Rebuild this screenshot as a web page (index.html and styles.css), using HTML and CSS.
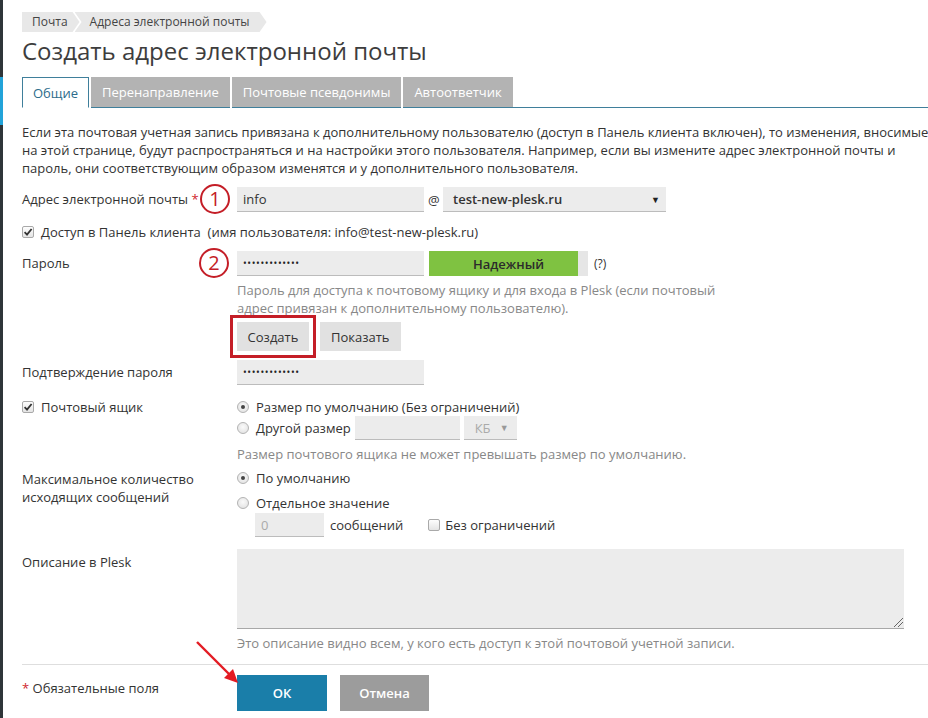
FILE: index.html
```html
<!DOCTYPE html>
<html lang="ru">
<head>
<meta charset="utf-8">
<title>Создать адрес электронной почты</title>
<link rel="stylesheet" href="styles.css">
</head>
<body>
<div class="layout">
  <div class="strip"><div class="strip-active"></div></div>
  <main class="main">
    <nav class="crumbs">
      <span class="crumb crumb-first">Почта</span>
      <span class="crumb crumb-next">Адреса электронной почты</span>
    </nav>
    <h1 class="title">Создать адрес электронной почты</h1>
    <div class="tabs">
      <span class="tab tab-active">Общие</span>
      <span class="tab">Перенаправление</span>
      <span class="tab">Почтовые псевдонимы</span>
      <span class="tab">Автоответчик</span>
      <span class="tab-rest"></span>
    </div>
    <p class="intro">
      <span class="line">Если эта почтовая учетная запись привязана к дополнительному пользователю (доступ в Панель клиента включен), то изменения, вносимые</span>
      <span class="line">на этой странице, будут распространяться и на настройки этого пользователя. Например, если вы измените адрес электронной почты и</span>
      <span class="line">пароль, они соответствующим образом изменятся и у дополнительного пользователя.</span>
    </p>

    <div class="row row-email">
      <div class="label label-input">Адрес электронной почты <span class="req">*</span></div>
      <div class="field inline">
        <span class="input input-main">info</span>
        <span class="at">@</span>
        <span class="select select-domain">test-new-plesk.ru<span class="caret">▼</span></span>
      </div>
      <span class="mark mark-1">1</span>
    </div>

    <div class="row-check">
      <span class="checkbox checked"><svg viewBox="0 0 12 12" width="12" height="12"><path d="M2.6 6.2 L5 8.6 L9.6 3" fill="none" stroke="#333" stroke-width="1.8"/></svg></span>
      <span>Доступ в Панель клиента &nbsp;(имя пользователя: info@test-new-plesk.ru)</span>
    </div>

    <div class="row row-pass">
      <div class="label label-input">Пароль</div>
      <div class="field">
        <div class="inline">
          <span class="input input-main dots">•••••••••••••</span>
          <span class="strength"><span class="strength-fill"></span><span class="strength-text">Надежный</span></span>
          <span class="hint-q">(?)</span>
        </div>
        <p class="help help-pass">Пароль для доступа к почтовому ящику и для входа в Plesk (если почтовый адрес привязан к дополнительному пользователю).</p>
        <div class="btns">
          <span class="btn btn-light btn-marked">Создать</span>
          <span class="btn btn-light">Показать</span>
        </div>
      </div>
      <span class="mark mark-2">2</span>
    </div>

    <div class="row row-confirm">
      <div class="label label-input">Подтверждение пароля</div>
      <div class="field"><span class="input input-main dots">•••••••••••••</span></div>
    </div>

    <div class="row row-mailbox">
      <div class="label label-check">
        <span class="checkbox checked"><svg viewBox="0 0 12 12" width="12" height="12"><path d="M2.6 6.2 L5 8.6 L9.6 3" fill="none" stroke="#333" stroke-width="1.8"/></svg></span>
        <span>Почтовый ящик</span>
      </div>
      <div class="field">
        <div class="radio-line first"><span class="radio on"></span>Размер по умолчанию (Без ограничений)</div>
        <div class="radio-line inline"><span class="radio"></span>Другой размер<span class="input input-size"></span><span class="select select-unit">КБ<span class="caret">▼</span></span></div>
        <p class="help">Размер почтового ящика не может превышать размер по умолчанию.</p>
      </div>
    </div>

    <div class="row row-limit">
      <div class="label label-multi">Максимальное количество<br>исходящих сообщений</div>
      <div class="field">
        <div class="radio-line first"><span class="radio on"></span>По умолчанию</div>
        <div class="radio-line second"><span class="radio"></span>Отдельное значение</div>
        <div class="sub inline">
          <span class="input input-num">0</span>
          <span class="sub-text">сообщений</span>
          <span class="checkbox"></span>
          <span>Без ограничений</span>
        </div>
      </div>
    </div>

    <div class="row row-desc">
      <div class="label label-multi desc-label">Описание в Plesk</div>
      <div class="field">
        <span class="textarea"><span class="grip"></span></span>
        <p class="help">Это описание видно всем, у кого есть доступ к этой почтовой учетной записи.</p>
      </div>
    </div>

    <div class="divider"></div>

    <div class="row row-foot">
      <div class="label label-multi foot-label"><span class="req">*</span> Обязательные поля</div>
      <div class="field btns-foot">
        <span class="btn btn-primary">ОК</span>
        <span class="btn btn-cancel">Отмена</span>
      </div>
      <svg class="arrow" width="50" height="50" viewBox="0 0 50 50">
        <line x1="4" y1="4" x2="38" y2="38" stroke="#e31b23" stroke-width="2.4"/>
        <polygon points="45,45 31,40 40,31" fill="#e31b23"/>
      </svg>
    </div>
  </main>
</div>
</body>
</html>
```
FILE: styles.css
```css
* { box-sizing: border-box; }
body {
  margin: 0;
  font-family: "Open Sans", "Noto Sans", sans-serif;
  font-size: 13px;
  color: #333;
  background: #fff;
}
.layout { display: flex; min-height: 718px; }
.strip { width: 3px; background: #2f3539; display: flex; flex-direction: column; }
.strip-active { margin-top: 77px; height: 48px; background: #22a3d9; }
.main { flex: 1; padding: 12px 0 0 19px; min-width: 0; }

/* breadcrumbs */
.crumbs { display: flex; height: 20px; }
.crumb {
  background: #e8e8e8;
  color: #444;
  font-size: 12px;
  line-height: 20px;
  white-space: nowrap;
}
.crumb-first {
  padding: 0 12px 0 10px;
  clip-path: polygon(0 0, calc(100% - 7px) 0, 100% 50%, calc(100% - 7px) 100%, 0 100%);
}
.crumb-next {
  margin-left: -5px;
  padding: 0 17px 0 15px;
  clip-path: polygon(0 0, calc(100% - 7px) 0, 100% 50%, calc(100% - 7px) 100%, 0 100%, 7px 50%);
}

.title {
  margin: 3px 0 0;
  font-size: 24px;
  line-height: 32px;
  font-weight: 400;
  color: #3d3d3d;
}

/* tabs */
.tabs { display: flex; gap: 2px; margin-top: 10px; height: 31px; }
.tab {
  padding: 0 11px;
  line-height: 30px;
  background: #b3b3b3;
  color: #fff;
  white-space: nowrap;
  border-bottom: 1px solid #3f7f9b;
  height: 31px;
}
.tab-active {
  background: #fff;
  color: #2d6c8c;
  border: 1px solid #3f7f9b;
  border-bottom-color: #fff;
  padding: 0 10px;
}
.tab-rest { flex: 1; border-bottom: 1px solid #3f7f9b; margin-left: -2px; }

.intro { margin: 15px 0 0; line-height: 18px; }
.intro .line { display: block; white-space: nowrap; }

/* rows */
.row { display: grid; grid-template-columns: 215px 1fr; align-items: start; position: relative; }
.label { white-space: nowrap; }
.label-input { line-height: 25px; }
.label-multi { line-height: 18px; }
.req { color: #d0262d; }
.inline { display: flex; align-items: center; }
.field { min-width: 0; }

.input {
  display: inline-block;
  height: 25px;
  line-height: 24px;
  padding: 0 6px;
  background: #ececec;
  border-bottom: 1px solid #bcbcbc;
  color: #333;
}
.input-main { width: 187px; }
.dots { font-size: 10px; letter-spacing: 0.6px; color: #222; }
.at { margin: 0 4px 0 4px; width: 11px; }
.select {
  display: inline-flex;
  align-items: center;
  justify-content: space-between;
  height: 25px;
  background: #ececec;
  border-bottom: 1px solid #bcbcbc;
  padding: 0 6px 0 10px;
}
.select-domain { width: 223px; font-weight: 600; font-size: 13px; }
.caret { font-size: 9px; font-weight: 400; color: #222; }

.row-email { margin-top: 10px; }
.row-check { display: flex; align-items: center; margin-top: 10px; height: 20px; gap: 7px; }
.row-pass { margin-top: 9px; }
.row-confirm { margin-top: 9px; }
.row-mailbox { margin-top: 12px; }
.row-limit { margin-top: 5px; }
.row-desc { margin-top: 12px; }

.checkbox {
  display: inline-block;
  width: 12px;
  height: 12px;
  border: 1px solid #a9a9a9;
  border-radius: 2px;
  background: linear-gradient(#fdfdfd, #e4e4e4);
  flex: none;
  position: relative;
}
.checkbox svg { position: absolute; left: -1px; top: -1px; }

.strength {
  position: relative;
  display: inline-flex;
  align-items: center;
  justify-content: center;
  width: 159px;
  height: 25px;
  margin-left: 5px;
  background: #e6e6e6;
}
.strength-fill { position: absolute; left: 0; top: 0; bottom: 0; width: 149px; background: #7fc241; }
.strength-text { position: relative; font-weight: 600; color: #2b2b2b; }
.hint-q { margin-left: 6px; font-size: 12px; }

.help { margin: 5px 0 0; line-height: 18px; color: #888; font-size: 13px; }
.help-pass { width: 486px; }

.btns { display: flex; gap: 11px; margin-top: 5px; }
.btn {
  display: inline-flex;
  align-items: center;
  justify-content: center;
  white-space: nowrap;
}
.btn-light { height: 29px; padding: 0 11px; background: #e1e1e1; color: #333; }
.btn-marked { outline: 3px solid #c41e27; outline-offset: 4px; width: 72px; }

.label-check { display: flex; align-items: center; gap: 7px; height: 19px; }
.radio-line { display: flex; align-items: center; }
.radio-line.first { height: 19px; }
.radio-line.inline { height: 24px; }
.radio {
  width: 12px;
  height: 12px;
  border-radius: 50%;
  border: 1px solid #b3b3b3;
  background: radial-gradient(circle at 50% 40%, #fafafa, #dedede);
  margin-right: 7px;
  flex: none;
  position: relative;
}
.radio.on::after {
  content: "";
  position: absolute;
  left: 3px; top: 3px;
  width: 4px; height: 4px;
  border-radius: 50%;
  background: #444;
}
.input-size { width: 105px; height: 24px; margin-left: 4px; }
.select-unit { width: 53px; height: 24px; margin-left: 4px; color: #aaa; padding: 0 8px 0 11px; }
.select-unit .caret { color: #999; }

.row-limit .label-multi { padding-top: 2px; }
.radio-line.second { height: 18px; margin-top: 7px; }
.sub { margin-top: 1px; padding-left: 18px; }
.input-num { width: 69px; height: 24px; color: #aaa; }
.sub-text { margin: 0 25px 0 6px; }
.sub .checkbox { margin-right: 5px; }

.desc-label { padding-top: 4px; }
.textarea {
  display: block;
  position: relative;
  width: 667px;
  height: 80px;
  background: #ececec;
  border-bottom: 1px solid #a8a8a8;
}
.grip {
  position: absolute;
  right: 1px; bottom: 1px;
  width: 9px; height: 9px;
  background: linear-gradient(135deg, transparent 45%, #666 45%, #666 52%, transparent 52%, transparent 70%, #666 70%, #666 77%, transparent 77%);
}

.divider { margin-top: 12px; height: 1px; background: #dedede; }

.row-foot { margin-top: 10px; }
.foot-label { padding-top: 4px; }
.btns-foot { display: flex; gap: 13px; }
.btn-primary { width: 90px; height: 36px; background: #1a7ea9; color: #fff; font-weight: 600; }
.btn-cancel { width: 89px; height: 36px; background: #9c9c9c; color: #fff; font-weight: 600; }

/* annotations */
.mark {
  position: absolute;
  width: 30px;
  height: 30px;
  border: 2.5px solid #c41e27;
  border-radius: 50%;
  color: #c41e27;
  font-size: 20px;
  line-height: 25px;
  text-align: center;
}
.mark-1 { left: 178px; top: -3px; }
.mark-2 { left: 177px; top: -3px; }
.arrow { position: absolute; left: 171px; top: -37px; }
```
